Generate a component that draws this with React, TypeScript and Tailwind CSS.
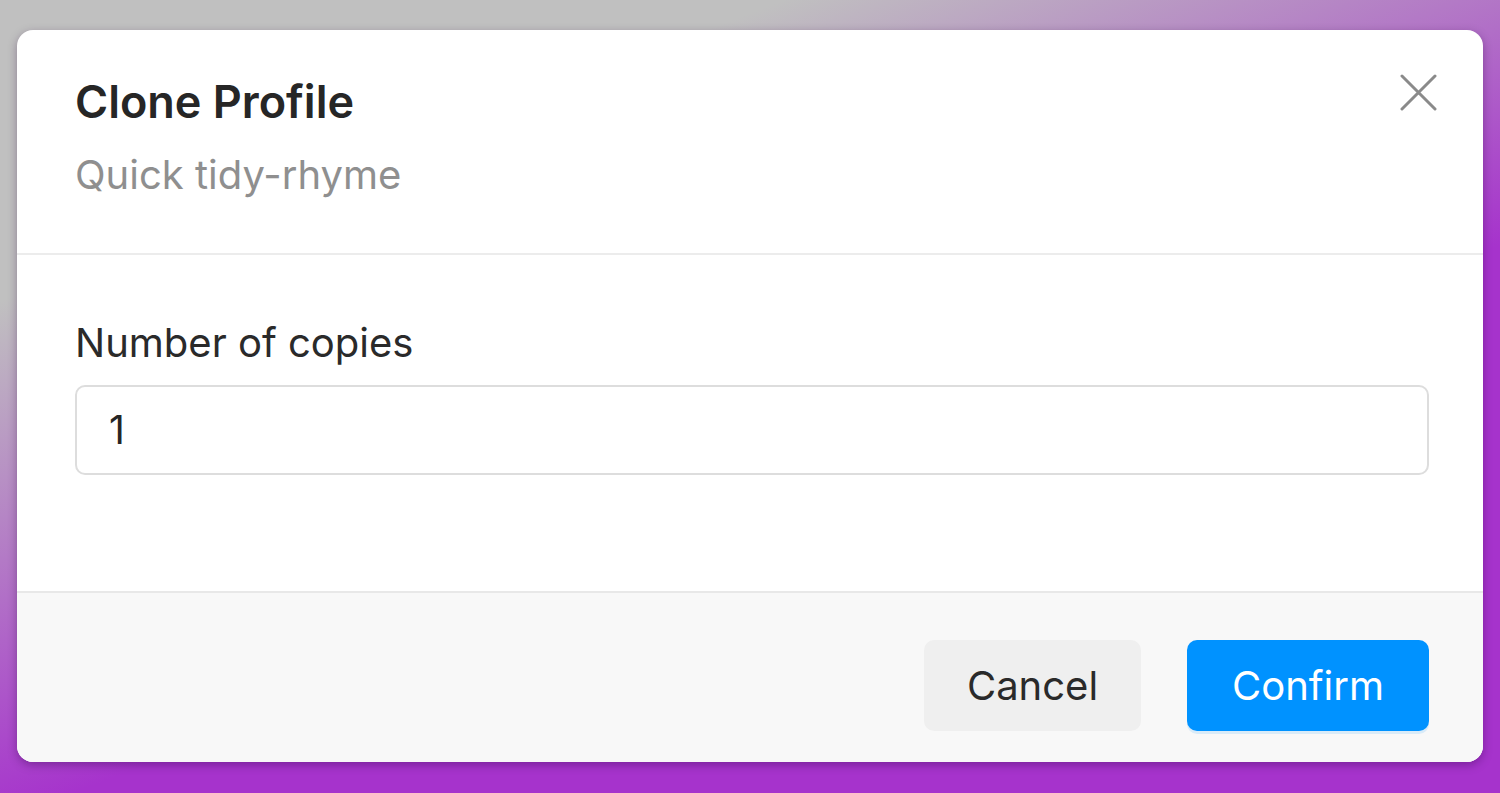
export default function App() {
  return (
    <div
      className="h-[793px] w-full overflow-hidden bg-[linear-gradient(159deg,#c0c0c0_22%,#a633cc_60%)] px-[17px] pt-[30px]"
      style={{ fontFamily: "Inter, 'Noto Sans', sans-serif" }}
    >
      <div className="flex h-[732px] flex-col overflow-hidden rounded-[16px] bg-white shadow-[0_3px_10px_rgba(40,0,60,0.35)]">
        {/* header */}
        <div className="relative border-b-2 border-[#ececec] pb-[54px] pl-[58px] pr-[55px] pt-[45px]">
          <h2 className="text-[45px] font-semibold leading-[53px] text-[#262626]">Clone Profile</h2>
          <p className="mt-[23px] text-[40px] leading-[48px] text-[#8f8f8f]">Quick tidy-rhyme</p>
          <button className="absolute right-[46px] top-[44px] text-[#8a8a8a]">
            <svg width="37" height="37" viewBox="0 0 37 37" fill="none" stroke="currentColor" strokeWidth="3" strokeLinecap="round">
              <path d="M2 2L35 35M35 2L2 35" />
            </svg>
          </button>
        </div>

        {/* body */}
        <div className="flex flex-1 flex-col pl-[58px] pr-[54px] pt-[64px]">
          <label className="text-[40px] leading-[47px] text-[#2a2a2a]">Number of copies</label>
          <div className="mt-[19px] flex h-[90px] items-center rounded-[10px] border-2 border-[#dddddd] px-[32px]">
            <span className="text-[39px] text-[#262626]">1</span>
          </div>
        </div>

        {/* footer */}
        <div className="flex justify-end gap-[46px] border-t-2 border-[#e8e8e8] bg-[#f8f8f8] pb-[31px] pl-[59px] pr-[54px] pt-[47px]">
          <button className="flex h-[91px] w-[217px] items-center justify-center rounded-[10px] bg-[#efefef] text-[40px] text-[#2a2a2a]">
            Cancel
          </button>
          <button className="flex h-[91px] w-[242px] items-center justify-center rounded-[10px] bg-[#0092ff] text-[40px] text-white shadow-[0_3px_0_rgba(0,146,255,0.12)]">
            Confirm
          </button>
        </div>
      </div>
    </div>
  )
}
